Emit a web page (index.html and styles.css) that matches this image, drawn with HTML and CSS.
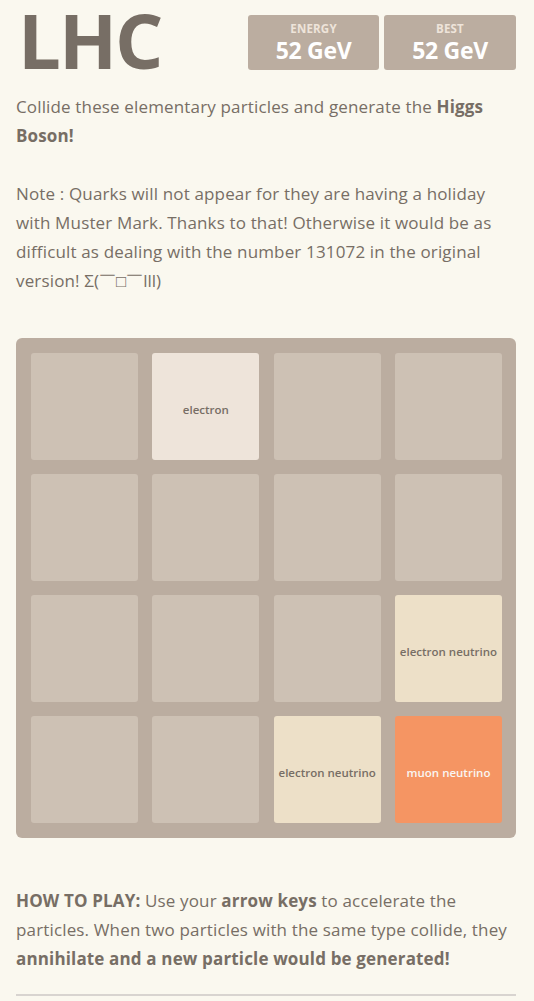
FILE: index.html
```html
<!DOCTYPE html>
<html>
<head>
<meta charset="utf-8">
<link rel="stylesheet" href="styles.css">
</head>
<body>
<div class="container">
  <div class="heading">
    <h1 class="title">LHC</h1>
    <div class="scores">
      <div class="score-box"><span class="score-label">ENERGY</span><span class="score-value">52 GeV</span></div>
      <div class="score-box best"><span class="score-label">BEST</span><span class="score-value">52 GeV</span></div>
    </div>
  </div>
  <p class="intro">Collide these elementary particles and generate the <strong>Higgs Boson!</strong><br><br>Note : Quarks will not appear for they are having a holiday with Muster Mark. Thanks to that! Otherwise it would be as difficult as dealing with the number 131072 in the original version! <span class="kao">Σ(￣□￣lll)</span></p>
  <div class="game">
    <div class="cell"></div>
    <div class="cell tile t2">electron</div>
    <div class="cell"></div>
    <div class="cell"></div>
    <div class="cell"></div>
    <div class="cell"></div>
    <div class="cell"></div>
    <div class="cell"></div>
    <div class="cell"></div>
    <div class="cell"></div>
    <div class="cell"></div>
    <div class="cell tile t4">electron neutrino</div>
    <div class="cell"></div>
    <div class="cell"></div>
    <div class="cell tile t4">electron neutrino</div>
    <div class="cell tile t8">muon neutrino</div>
  </div>
  <p class="howto"><strong>HOW TO PLAY:</strong> Use your <strong>arrow keys</strong> to accelerate the particles. When two particles with the same type collide, they <strong>annihilate and a new particle would be generated!</strong></p>
  <hr class="rule">
</div>
</body>
</html>
```

FILE: styles.css
```css
html, body {
  margin: 0;
  padding: 0;
  background: #faf8ef;
}
body {
  font-family: "Open Sans", "Noto Sans", sans-serif;
  color: #776e65;
  font-size: 18px;
}
.container {
  width: 500px;
  margin: 0 0 0 16px;
}
.heading {
  display: flex;
  justify-content: space-between;
  align-items: flex-start;
  height: 92px;
}
.title {
  margin: -12px 0 0 2px;
  font-size: 76px;
  font-weight: 700;
  line-height: 104px;
  letter-spacing: -2px;
  color: #776e65;
}
.scores {
  display: flex;
  gap: 5px;
  margin-top: 15px;
}
.score-box {
  width: 131px;
  height: 55px;
  background: #bbada0;
  border-radius: 3px;
  display: flex;
  flex-direction: column;
  align-items: center;
  box-sizing: border-box;
  padding-top: 6px;
}
.score-box.best { width: 132px; }
.score-label {
  font-size: 11.5px;
  font-weight: 700;
  color: #eee4da;
  line-height: 15px;
  letter-spacing: 0.2px;
}
.score-value {
  font-size: 23px;
  font-weight: 700;
  color: #ffffff;
  line-height: 29px;
  letter-spacing: -0.3px;
}
.intro {
  margin: 0;
  line-height: 29px;
  font-size: 17px;
  letter-spacing: 0.15px;
}
.kao { white-space: nowrap; letter-spacing: 0; }
.intro strong, .howto strong { font-weight: 700; }
.game {
  margin-top: 43px;
  width: 500px;
  height: 500px;
  box-sizing: border-box;
  padding: 15px;
  background: #bbada0;
  border-radius: 6px;
  display: grid;
  grid-template-columns: repeat(4, 107px);
  grid-template-rows: repeat(4, 107px);
  gap: 14px 14.33px;
}
.cell {
  background: #cdc1b4;
  border-radius: 3px;
}
.tile {
  display: flex;
  align-items: center;
  justify-content: center;
  font-size: 11.5px;
  font-weight: 600;
  color: #776e65;
  text-align: center;
  padding-top: 6px;
  box-sizing: border-box;
}
.t2 { background: #eee4da; }
.t4 { background: #ede0c8; }
.t8 { background: #f59563; color: #f9f6f2; }
.howto {
  margin: 48px 0 0;
  line-height: 29px;
  font-size: 17px;
  letter-spacing: 0.15px;
}
.rule {
  margin: 21px 0 0;
  border: none;
  border-top: 2px solid #d8d4d0;
}
```
